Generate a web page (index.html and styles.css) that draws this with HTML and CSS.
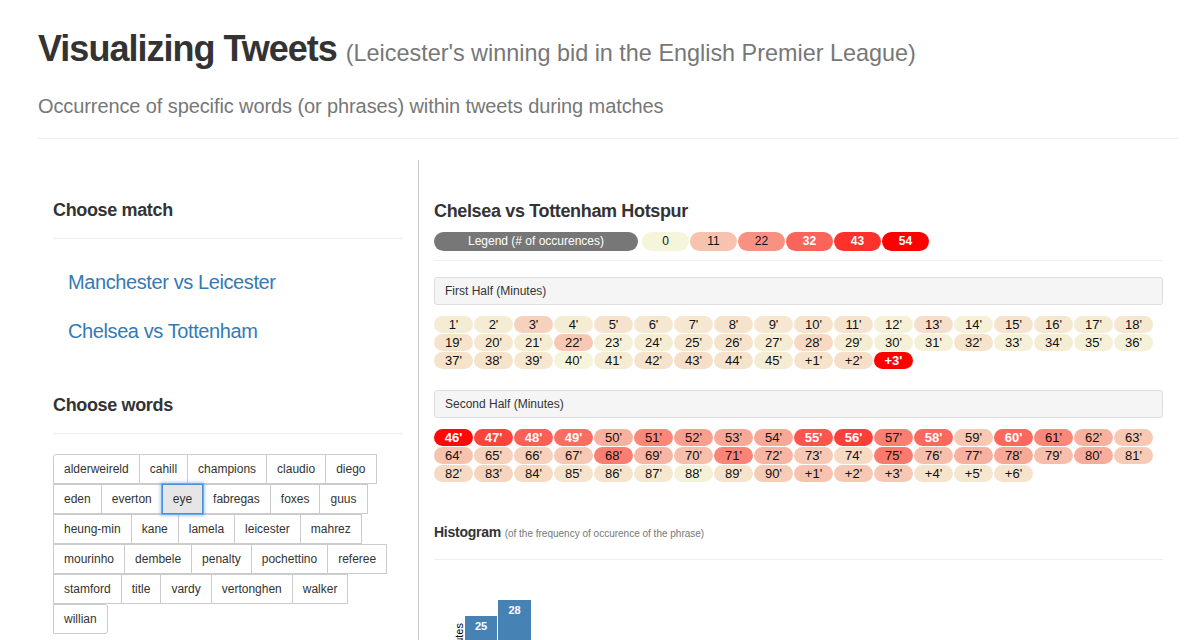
FILE: index.html
```html
<!DOCTYPE html>
<html lang="en">
<head>
<meta charset="utf-8">
<title>Visualizing Tweets</title>
<link rel="stylesheet" href="styles.css">
</head>
<body>
<div class="page">
  <header class="header">
    <h1 class="title">Visualizing Tweets <small>(Leicester's winning bid in the English Premier League)</small></h1>
    <p class="lead">Occurrence of specific words (or phrases) within tweets during matches</p>
  </header>

  <div class="main">
    <aside class="sidebar">
      <h4 class="sec-title">Choose match</h4>
      <ul class="matches">
        <li><a href="#">Manchester vs Leicester</a></li>
        <li><a href="#">Chelsea vs Tottenham</a></li>
      </ul>

      <h4 class="sec-title">Choose words</h4>
      <div class="words">
        <div class="wrow">
          <button class="btn first-btn">alderweireld</button><button class="btn">cahill</button><button class="btn">champions</button><button class="btn">claudio</button><button class="btn">diego</button>
        </div>
        <div class="wrow">
          <button class="btn">eden</button><button class="btn">everton</button><button class="btn active">eye</button><button class="btn">fabregas</button><button class="btn">foxes</button><button class="btn">guus</button>
        </div>
        <div class="wrow">
          <button class="btn">heung-min</button><button class="btn">kane</button><button class="btn">lamela</button><button class="btn">leicester</button><button class="btn">mahrez</button>
        </div>
        <div class="wrow">
          <button class="btn">mourinho</button><button class="btn">dembele</button><button class="btn">penalty</button><button class="btn">pochettino</button><button class="btn">referee</button>
        </div>
        <div class="wrow">
          <button class="btn">stamford</button><button class="btn">title</button><button class="btn">vardy</button><button class="btn">vertonghen</button><button class="btn">walker</button>
        </div>
        <div class="wrow">
          <button class="btn last-btn">willian</button>
        </div>
      </div>
    </aside>

    <section class="content">
      <h4 class="match-title">Chelsea vs Tottenham Hotspur</h4>
      <div class="legend">
        <span class="legend-label">Legend (# of occurences)</span>
        <span class="lg" data-c="0">0</span>
        <span class="lg" data-c="11">11</span>
        <span class="lg" data-c="22">22</span>
        <span class="lg hot" data-c="32">32</span>
        <span class="lg hot" data-c="43">43</span>
        <span class="lg hot" data-c="54">54</span>
      </div>

      <div class="panel-heading">First Half (Minutes)</div>
      <div class="minutes" id="first-half"></div>

      <div class="panel-heading">Second Half (Minutes)</div>
      <div class="minutes" id="second-half"></div>

      <h5 class="hist-title">Histogram <small>(of the frequency of occurence of the phrase)</small></h5>
      <svg class="hist" width="729" height="82" viewBox="0 0 729 82">
        <text class="axis-label" transform="translate(29,63) rotate(-90)" text-anchor="end">Minutes</text>
        <rect class="bar" x="31" y="56" width="32" height="40"></rect>
        <rect class="bar" x="64" y="40" width="33" height="60"></rect>
        <text class="bar-label" x="47" y="70" text-anchor="middle">25</text>
        <text class="bar-label" x="80.5" y="54" text-anchor="middle">28</text>
      </svg>
    </section>
  </div>
</div>
<script src="script.js"></script>
</body>
</html>
```

FILE: styles.css
```css
* { box-sizing: border-box; }

body {
  margin: 0;
  font-family: "Liberation Sans", Arial, Helvetica, sans-serif;
  color: #333;
  background: #fff;
}

.page {
  width: 1140px;
  margin-left: 38px;
}

/* Header */
.header {
  padding: 29px 0 18px;
  border-bottom: 1px solid #eee;
}

.title {
  margin: 0;
  font-size: 36px;
  line-height: 40px;
  font-weight: bold;
  letter-spacing: -1px;
  color: #333;
}

.title small {
  font-size: 23.4px;
  line-height: 1;
  font-weight: normal;
  letter-spacing: 0;
  color: #777;
}

.lead {
  margin: 23px 0 0;
  font-size: 20px;
  line-height: 28px;
  letter-spacing: -0.1px;
  color: #777;
}

/* Layout */
.main {
  display: flex;
  margin-top: 21px;
}

.sidebar {
  width: 381px;
  flex-shrink: 0;
  padding: 0 15px;
  border-right: 1px solid #ccc;
}

.content {
  flex: 1;
  padding: 0 15px;
}

.sec-title {
  margin: 40px 0 0;
  padding-bottom: 18px;
  border-bottom: 1px solid #eee;
  font-size: 18px;
  line-height: 20px;
  font-weight: bold;
  letter-spacing: -0.35px;
  color: #333;
}

.matches {
  list-style: none;
  margin: 20px 0 0;
  padding: 0;
}

.matches li + li { margin-top: 2px; }

.matches a {
  display: block;
  padding: 10px 15px;
  font-size: 20px;
  line-height: 27px;
  letter-spacing: -0.4px;
  color: #337ab7;
  text-decoration: none;
}

/* Word buttons */
.words { margin-top: 20px; }

.wrow { display: flex; }

.btn {
  font-family: inherit;
  font-size: 12px;
  line-height: 18px;
  padding: 5px 10px;
  border: 1px solid #ccc;
  border-radius: 0;
  background: #fff;
  color: #333;
  margin: 0 0 0 -1px;
  cursor: pointer;
}

.wrow .btn:first-child { margin-left: 0; }

.first-btn { border-top-left-radius: 3px; }
.last-btn { border-top-right-radius: 3px; border-bottom-right-radius: 3px; }

.btn.active {
  position: relative;
  z-index: 2;
  background: #e6e6e6;
  border-color: #4a8fdc;
  box-shadow: 0 0 0 1px #6ea9ea, 0 0 3px 2px rgba(90, 155, 230, 0.45);
}

/* Right content */
.match-title {
  margin: 41px 0 0;
  font-size: 18px;
  line-height: 20px;
  font-weight: bold;
  letter-spacing: -0.35px;
  color: #333;
}

.legend {
  display: flex;
  margin-top: 11px;
  padding-bottom: 9px;
  border-bottom: 1px solid #eee;
}

.legend-label,
.lg {
  height: 19px;
  line-height: 19px;
  font-size: 12px;
  text-align: center;
  border-radius: 9.5px;
}

.legend-label {
  width: 204px;
  margin-right: 4px;
  background: #777;
  color: #fff;
}

.lg {
  width: 47px;
  margin-right: 1px;
  color: #111;
}

.panel-heading {
  margin-top: 16px;
  padding: 4px 10px;
  font-size: 12px;
  line-height: 18px;
  background: #f5f5f5;
  border: 1px solid #ddd;
  border-radius: 3px;
  color: #333;
}

.minutes {
  display: flex;
  flex-wrap: wrap;
  gap: 1px;
  margin: 11px 0 21px;
}

.cell {
  width: 39px;
  height: 17px;
  line-height: 17px;
  border-radius: 8.5px;
  text-align: center;
  font-size: 13px;
  color: #111;
}

.hot {
  color: #fff;
  font-weight: bold;
}

.hist-title {
  margin: 40px 0 0;
  padding-bottom: 15px;
  border-bottom: 1px solid #eee;
  font-size: 14px;
  line-height: 20px;
  font-weight: bold;
  letter-spacing: -0.25px;
  color: #333;
}

.hist-title small {
  font-size: 10px;
  font-weight: normal;
  letter-spacing: 0;
  color: #777;
}

.hist {
  display: block;
}

.bar { fill: #4682b4; }

.bar-label {
  fill: #fff;
  font-family: "Liberation Sans", Arial, sans-serif;
  font-size: 11px;
  font-weight: bold;
}

.axis-label {
  fill: #000;
  font-family: "Liberation Sans", Arial, sans-serif;
  font-size: 11px;
}
```

FILE: script.js
```js
(function () {
  function color(c) {
    var t = Math.max(0, Math.min(1, c / 54));
    var r = Math.round(245 + 10 * t);
    var g = Math.round(245 * (1 - t));
    var b = Math.round(220 * (1 - t));
    return "rgb(" + r + "," + g + "," + b + ")";
  }

  var firstLabels = [];
  for (var i = 1; i <= 45; i++) firstLabels.push(i + "'");
  firstLabels.push("+1'", "+2'", "+3'");
  var firstCounts = [
    2, 2, 8, 2, 4, 3, 3, 4, 3, 4, 4, 1, 5, 1, 4, 3, 2, 3,
    4, 3, 2, 10, 1, 2, 3, 4, 2, 6, 2, 1, 1, 4, 1, 2, 1, 1,
    4, 4, 3, 0, 2, 4, 5, 4, 2, 4, 5, 54
  ];

  var secondLabels = [];
  for (var j = 46; j <= 90; j++) secondLabels.push(j + "'");
  secondLabels.push("+1'", "+2'", "+3'", "+4'", "+5'", "+6'");
  var secondCounts = [
    52, 39, 33, 30, 15, 24, 19, 17, 17, 35, 40, 26, 31, 10, 31, 24, 15, 10,
    11, 8, 8, 10, 26, 14, 12, 25, 14, 10, 6, 27, 12, 15, 17, 12, 16, 9,
    6, 7, 6, 4, 4, 3, 1, 4, 9, 11, 10, 10, 4, 3, 4
  ];

  function fill(id, labels, counts) {
    var el = document.getElementById(id);
    for (var k = 0; k < labels.length; k++) {
      var s = document.createElement("span");
      s.className = "cell" + (counts[k] >= 29 ? " hot" : "");
      s.textContent = labels[k];
      s.style.background = color(counts[k]);
      el.appendChild(s);
    }
  }

  fill("first-half", firstLabels, firstCounts);
  fill("second-half", secondLabels, secondCounts);

  var lgs = document.querySelectorAll("[data-c]");
  for (var m = 0; m < lgs.length; m++) {
    lgs[m].style.background = color(parseFloat(lgs[m].getAttribute("data-c")));
  }
})();
```
